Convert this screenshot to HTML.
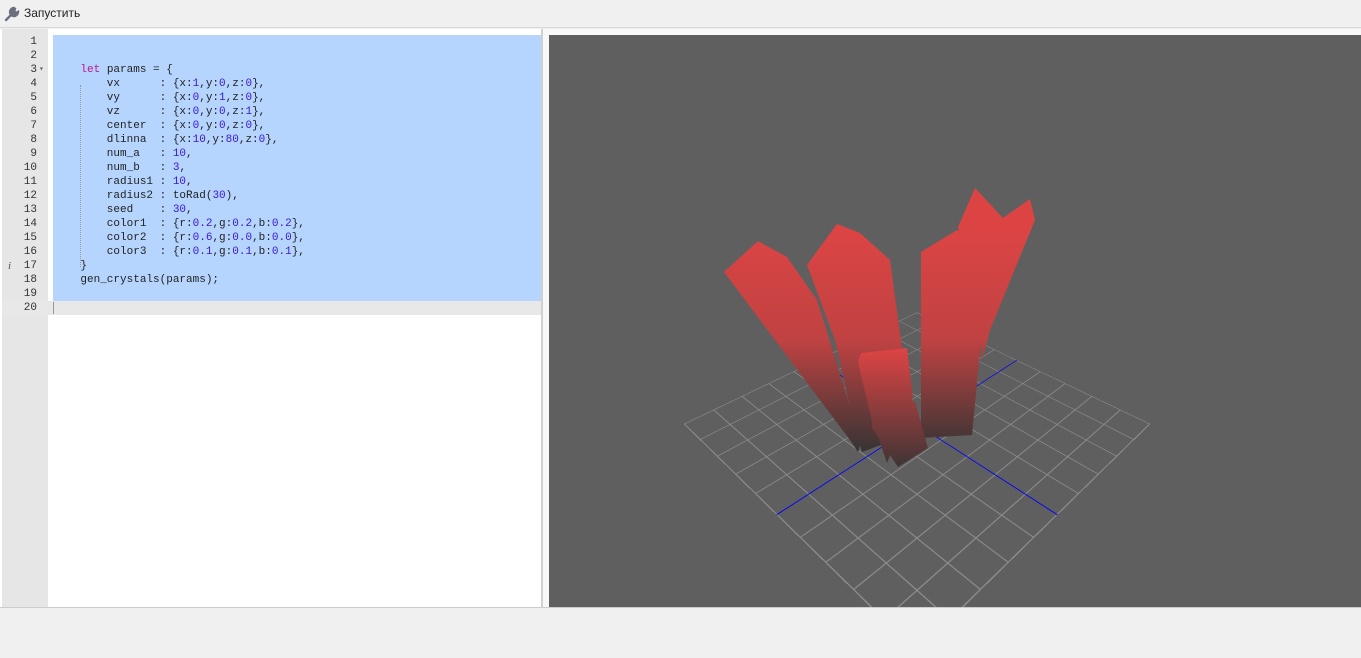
<!DOCTYPE html>
<html><head><meta charset="utf-8"><style>
*{margin:0;padding:0;box-sizing:border-box}
body{width:1361px;height:658px;background:#f0f0f0;position:relative;overflow:hidden;font-family:"Liberation Sans",sans-serif}
.top{position:absolute;left:0;top:0;width:1361px;height:28px;background:#f0f0f0;border-bottom:1px solid #d8d8d8}
.top span{position:absolute;left:24px;top:6px;font-size:12px;color:#222}
.left{position:absolute;left:0;top:29px;width:542px;height:579px;background:#fff;border-bottom:1px solid #ccc}
.gut{position:absolute;left:2px;top:0;width:46px;height:578px;background:#e6e6e6}
.sel{position:absolute;left:53px;top:6px;width:488px;height:266px;background:#b5d5ff}
.cur{position:absolute;left:2px;top:272px;width:539px;height:14px;background:#e8e8e8}
.cur2{position:absolute;left:53px;top:273px;width:1px;height:12px;background:#999}
.code{position:absolute;top:6px;font-family:"Liberation Mono",monospace;font-size:11px;line-height:14px;white-space:pre;color:#222}
.ln{left:2px;width:35px;text-align:right;color:#333}
.tx{left:54px}
.k{color:#c0148c}.n{color:#3a16d6}
.guide{position:absolute;left:80px;top:56px;height:182px;border-left:1px dotted #999}
.div{position:absolute;left:541px;top:29px;width:2px;height:579px;background:#d0d0d0}
.rp{position:absolute;left:543px;top:29px;width:818px;height:579px;background:#f8f8f8;border-bottom:1px solid #ccc}
.cv{position:absolute;left:549px;top:35px;width:812px;height:572px;background:#5f5f5f;overflow:hidden}
.grid{position:absolute;left:203px;top:224px;width:330px;height:330px;transform:perspective(520px) rotateX(50deg) rotateZ(45deg);
background-image:linear-gradient(#8c8c8c 1px,transparent 1px),linear-gradient(90deg,#8c8c8c 1px,transparent 1px);background-size:33px 33px;border-right:1px solid #8c8c8c;border-bottom:1px solid #8c8c8c}
.ax1{position:absolute;left:165px;top:0;width:1px;height:330px;background:#0000ff}
.ax2{position:absolute;left:0;top:165px;width:330px;height:1px;background:#0000ff}
</style></head><body>
<div class="top">
<svg style="position:absolute;left:4px;top:6px" width="16" height="16" viewBox="0 0 16 16"><path d="M2 14 L8 8 M10 2 a4 4 0 1 0 4 4 l-2 1 l-2 -2 l1 -2 z" stroke="#6a7080" stroke-width="2.4" fill="#6a7080" stroke-linecap="round"/></svg>
<span>Запустить</span></div>
<div class="left">
<div class="gut"></div>
<div class="sel"></div>
<div class="cur"></div><div class="cur2"></div>
<div class="guide"></div>
<div class="code ln">1
2
3
4
5
6
7
8
9
10
11
12
13
14
15
16
17
18
19
20</div>
<div class="code" style="left:39px;top:34px;font-size:8px;color:#666">▾</div>
<div class="code" style="left:8px;top:230px;font-style:italic;color:#555;font-family:'Liberation Serif',serif">i</div>
<div class="code tx">

    <span class="k">let</span> params = {
        vx      : {x:<span class="n">1</span>,y:<span class="n">0</span>,z:<span class="n">0</span>},
        vy      : {x:<span class="n">0</span>,y:<span class="n">1</span>,z:<span class="n">0</span>},
        vz      : {x:<span class="n">0</span>,y:<span class="n">0</span>,z:<span class="n">1</span>},
        center  : {x:<span class="n">0</span>,y:<span class="n">0</span>,z:<span class="n">0</span>},
        dlinna  : {x:<span class="n">10</span>,y:<span class="n">80</span>,z:<span class="n">0</span>},
        num_a   : <span class="n">10</span>,
        num_b   : <span class="n">3</span>,
        radius1 : <span class="n">10</span>,
        radius2 : toRad(<span class="n">30</span>),
        seed    : <span class="n">30</span>,
        color1  : {r:<span class="n">0.2</span>,g:<span class="n">0.2</span>,b:<span class="n">0.2</span>},
        color2  : {r:<span class="n">0.6</span>,g:<span class="n">0.0</span>,b:<span class="n">0.0</span>},
        color3  : {r:<span class="n">0.1</span>,g:<span class="n">0.1</span>,b:<span class="n">0.1</span>},
    }
    gen_crystals(params);</div>
</div>
<div class="div"></div>
<div class="rp"></div>
<div class="cv">
<div class="grid"><div class="ax1"></div><div class="ax2"></div></div>
<svg style="position:absolute;left:-549px;top:-35px" width="1361" height="658">
<defs>
<linearGradient id="g" gradientUnits="userSpaceOnUse" x1="0" y1="230" x2="0" y2="450"><stop offset="0" stop-color="#dc4444"/><stop offset="0.5" stop-color="#c04242"/><stop offset="1" stop-color="#383434"/></linearGradient>
<linearGradient id="g2" gradientUnits="userSpaceOnUse" x1="0" y1="350" x2="0" y2="470"><stop offset="0" stop-color="#dc4444"/><stop offset="1" stop-color="#3a3434"/></linearGradient>
</defs>
<polygon fill="url(#g)" points="958,227 975,188 1003,218 1030,199 1035,220 990,330 982,360 978,300"/>
<polygon fill="url(#g)" points="724,272 758,241 787,257 817,300 848,400 862,440 858,452 850,440"/>
<polygon fill="url(#g)" points="807,265 837,224 860,233 890,260 905,370 913,433 862,452 853,420 835,340"/>
<polygon fill="url(#g)" points="921,252 957,230 988,243 983,320 972,435 921,438"/>
<polygon fill="url(#g2)" points="858,362 861,353 907,348 913,397 887,463 870,413"/>
<polygon fill="url(#g2)" points="870,390 882,387 915,402 928,448 898,467 872,428"/>
</svg>
</div>
</body></html>
